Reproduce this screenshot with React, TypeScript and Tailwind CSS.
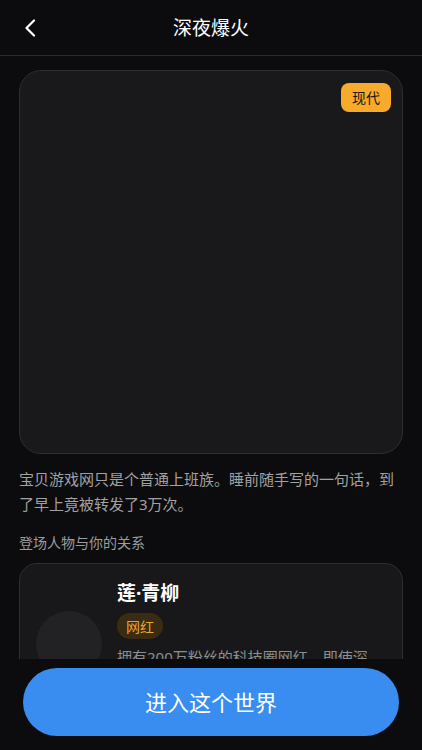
import React from "react";

export default function App() {
  return (
    <div
      className="w-[422px] h-[750px] bg-[#0c0c0e] flex flex-col overflow-hidden"
      style={{ fontFamily: '"Noto Sans", "Noto Sans CJK SC", sans-serif' }}
    >
      {/* Header */}
      <div className="relative h-[56px] flex items-center justify-center border-b border-[#2c2c2e] shrink-0">
        <button className="absolute left-[20px] top-[16px] w-[20px] h-[24px] flex items-center justify-center">
          <svg width="12" height="18" viewBox="0 0 12 18" fill="none">
            <path d="M10 1.5 L2.5 9 L10 16.5" stroke="#ffffff" strokeWidth="2.2" strokeLinecap="round" strokeLinejoin="round" />
          </svg>
        </button>
        <div className="text-white text-[19px] leading-[28px] font-normal">深夜爆火</div>
      </div>

      {/* Content */}
      <div className="flex-1 overflow-hidden px-[19px] pt-[14px]">
        <div className="relative w-[384px] h-[384px] rounded-[22px] bg-[#19191b] border border-[#2e2e30]">
          <div className="absolute right-[11px] top-[12px] h-[29px] px-[11px] rounded-[8px] bg-[#f8aa2c] flex items-center text-[14px] text-[#1c1408]">
            现代
          </div>
        </div>

        <p className="mt-[13px] text-[15px] leading-[25px] text-[#a2a2a4]">
          宝贝游戏网只是个普通上班族。睡前随手写的一句话，到了早上竟被转发了3万次。
        </p>

        <p className="mt-[16px] text-[14px] leading-[20px] text-[#9c9c9e]">登场人物与你的关系</p>

        <div className="mt-[10px] rounded-[18px] bg-[#18181a] border border-[#2e2e30] pl-[16px] pr-[22px] pt-[14px] pb-[16px] flex items-start gap-[15px]">
          <div className="mt-[33px] w-[66px] h-[66px] rounded-full bg-[#222225] shrink-0" />
          <div className="flex flex-col">
            <div className="text-white text-[19px] leading-[30px] font-bold">莲·青柳</div>
            <div className="mt-[5px] self-start h-[26px] px-[9px] rounded-full bg-[#3a2c12] flex items-center text-[14px] text-[#e8a530]">
              网红
            </div>
            <div className="mt-[6px] text-[15px] leading-[24px] text-[#8e8e90]">
              拥有200万粉丝的科技圈网红。即使深夜也在直播，在网上有着极高的人气。
            </div>
          </div>
        </div>
      </div>

      {/* Footer */}
      <div className="shrink-0 h-[91px] bg-[#0c0c0e] px-[23px] pt-[9px]">
        <button className="w-full h-[68px] rounded-full bg-[#3a8df0] text-white text-[22px] flex items-center justify-center">
          进入这个世界
        </button>
      </div>
    </div>
  );
}
